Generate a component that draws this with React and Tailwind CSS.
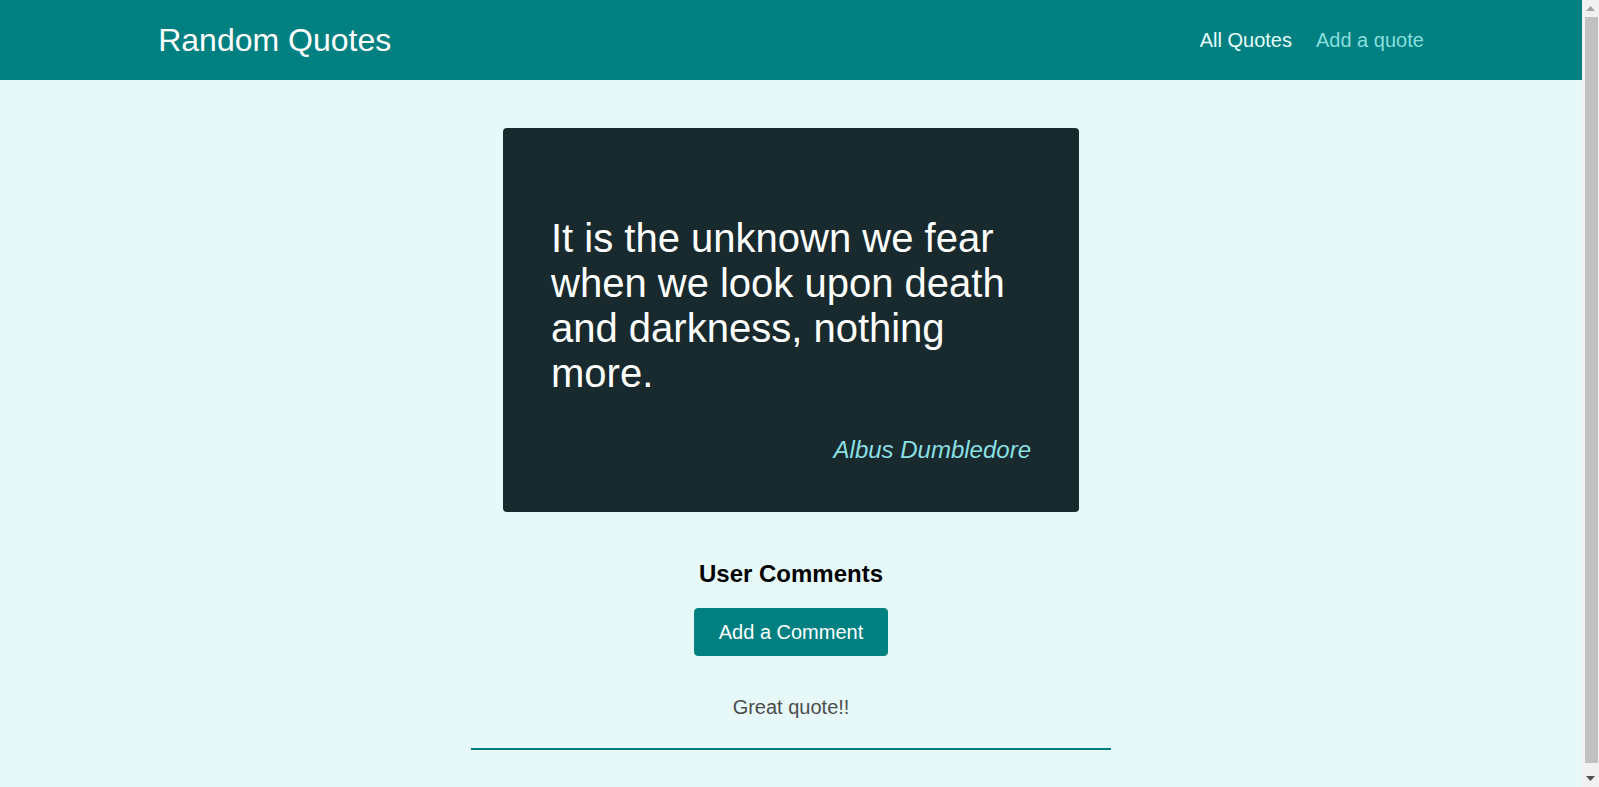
import { useState } from 'react'

const QUOTE = {
  text: 'It is the unknown we fear when we look upon death and darkness, nothing more.',
  author: 'Albus Dumbledore',
}

const COMMENTS = [{ id: 'c1', text: 'Great quote!!' }]

// classic browser scrollbar, as seen in the capture
function Scrollbar() {
  return (
    <div className="w-[17px] h-full flex flex-col bg-[#f1f1f1]">
      <div className="h-[17px] flex items-center justify-center">
        <svg width="9" height="5" viewBox="0 0 9 5">
          <path d="M0 5 L4.5 0 L9 5 Z" fill="#a3a3a3" />
        </svg>
      </div>
      <div className="flex-1 ml-[3px] mr-[1px] mb-[7px] bg-[#c1c1c1]" />
      <div className="h-[17px] flex items-center justify-center">
        <svg width="9" height="5" viewBox="0 0 9 5">
          <path d="M0 0 L9 0 L4.5 5 Z" fill="#505050" />
        </svg>
      </div>
    </div>
  )
}

export default function App() {
  const [active] = useState('all')

  return (
    <div className="h-screen flex bg-[#e6f8f8] font-['Liberation_Sans',Arial,sans-serif]">
      <div className="flex-1 overflow-hidden">
        {/* Header */}
        <header className="h-20 w-full flex items-center justify-between bg-[#008080] px-[10%]">
          <div className="text-[32px] text-white">Random Quotes</div>
          <nav>
            <ul className="flex items-center gap-6 text-[20px]">
              <li>
                <a className={active === 'all' ? 'text-[#e6fcfc]' : 'text-[#88dfdf]'}>All Quotes</a>
              </li>
              <li>
                <a className={active === 'new' ? 'text-[#e6fcfc]' : 'text-[#88dfdf]'}>Add a quote</a>
              </li>
            </ul>
          </nav>
        </header>

        <main className="flex flex-col items-center">
          {/* Quote */}
          <figure className="mt-12 w-[576px] rounded bg-[#182a2d] p-12 text-white">
            <p className="my-10 text-[40px] leading-[45px]">{QUOTE.text}</p>
            <figcaption className="text-right text-[24px] leading-[28px] italic text-[#8adfe3]">
              {QUOTE.author}
            </figcaption>
          </figure>

          {/* Comments */}
          <section className="mt-12 flex flex-col items-center pb-[43px]">
            <h2 className="text-[24px] font-bold text-black leading-[28px]">User Comments</h2>
            <button className="mt-5 h-12 rounded border border-[#008080] bg-[#008080] px-6 text-[20px] text-white">
              Add a Comment
            </button>
            <ul className="mt-10 w-[640px]">
              {COMMENTS.map((c) => (
                <li key={c.id} className="border-b-2 border-[#008080] pb-[29px] text-center">
                  <p className="text-[20px] leading-[23px] text-[#4d4d4d]">{c.text}</p>
                </li>
              ))}
            </ul>
          </section>
        </main>
      </div>
      <Scrollbar />
    </div>
  )
}
